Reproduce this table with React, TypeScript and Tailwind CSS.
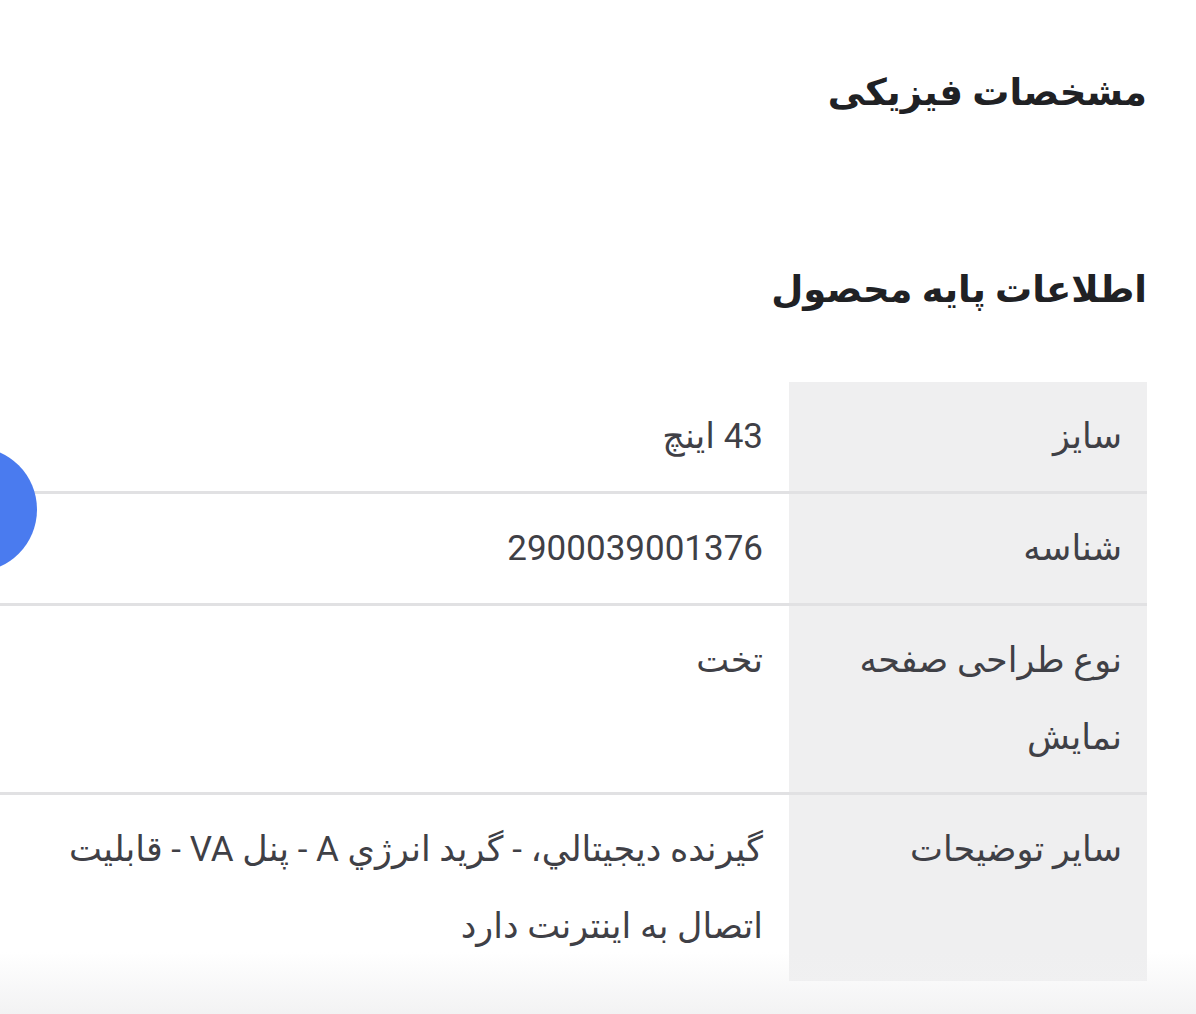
const rows = [
  { label: "سایز", value: "43 اینچ" },
  { label: "شناسه", value: "2900039001376" },
  { label: "نوع طراحی صفحه نمایش", value: "تخت" },
  {
    label: "سایر توضیحات",
    value: "گیرنده دیجیتالي، - گرید انرژي A - پنل VA - قابلیت اتصال به اینترنت دارد",
  },
];

const App = () => {
  return (
    <div
      dir="rtl"
      className="relative w-full h-[1014px] overflow-hidden bg-white font-['Roboto','DejaVu_Sans',sans-serif]"
    >
      <div className="pr-[49px]">
        <h2 className="pt-[69px] text-[37px] leading-[48px] font-bold text-[#202124]">
          مشخصات فیزیکی
        </h2>
        <h2 className="mt-[149px] text-[37px] leading-[48px] font-bold text-[#202124]">
          اطلاعات پایه محصول
        </h2>

        <div className="mt-[68px] w-[1187px] flex flex-col">
          {rows.map((row, index) => (
            <div
              key={index}
              className={`flex ${index < rows.length - 1 ? "border-b-[3px] border-[#e1e1e3]" : ""}`}
            >
              <div className="w-[358px] shrink-0 bg-[#efeff0] pr-[25px] pl-4 py-4 text-[35px] leading-[77px] text-[#3f4046]">
                {row.label}
              </div>
              <div className="flex-1 pr-[26px] pl-[60px] py-4 text-[35px] leading-[77px] text-[#3f4046]">
                {row.value}
              </div>
            </div>
          ))}
        </div>
      </div>

      <div className="absolute left-[-88px] top-[447px] w-[125px] h-[125px] rounded-full bg-[#4a7bef]" />

      <div className="absolute left-0 right-0 bottom-0 h-[62px] bg-gradient-to-b from-white/0 to-[#f1f1f2]/90 pointer-events-none" />
    </div>
  );
};

export default App;
